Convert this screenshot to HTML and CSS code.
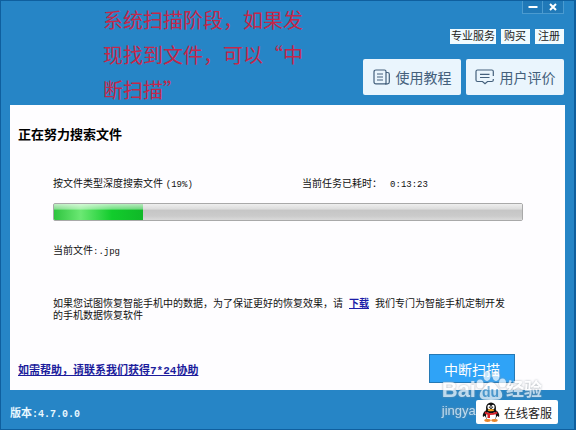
FILE: index.html
```html
<!DOCTYPE html>
<html lang="zh-CN">
<head>
  <meta charset="UTF-8" />
  <meta name="viewport" content="width=device-width, initial-scale=1.0"/>
  <title>数据恢复</title>
  <link rel="stylesheet" href="styles.css">
</head>
<body>
  <div class="window">
    <p class="note">系统扫描阶段，如果发现找到文件，可以“中断扫描”</p>

    <header class="header">
      <div class="window-controls">
        <button class="control" aria-label="最小化">
          <svg width="10" height="10" viewBox="0 0 10 10"><path d="M0.5 5H9.5" stroke="#fff" stroke-width="2"/></svg>
        </button>
        <button class="control" aria-label="关闭">
          <svg width="8" height="8" viewBox="0 0 8 8"><path d="M1 1L7 7M7 1L1 7" stroke="#fff" stroke-width="2"/></svg>
        </button>
      </div>
      <nav class="links">
        <button class="tag">专业服务</button>
        <button class="tag">购买</button>
        <button class="tag">注册</button>
      </nav>
      <div class="actions">
        <button class="action">
          <svg width="18" height="16" viewBox="0 0 18 16" fill="none" stroke="#44607c" stroke-width="1.2">
            <path d="M3 1H11.500Q13 1 13 2.500V14.800H3Q1 14.800 1 13V3Q1 1 3 1Z"/>
            <path d="M13 3.500H14.500Q16.300 3.500 16.300 5.300V13Q16.300 14.800 14.500 14.800H12"/>
            <path d="M4 5H10M4 8H10M4 11H10"/>
          </svg>
          使用教程
        </button>
        <button class="action">
          <svg width="20" height="16" viewBox="0 0 20 16" fill="none" stroke="#44607c" stroke-width="1.2">
            <path d="M18.300 7V2.500Q18.300 1 16.800 1H2.500Q1 1 1 2.500V11Q1 12.500 2.500 12.500H7.500L10 14.800L12.500 12.500H16.800Q18.300 12.500 18.300 11V10"/>
            <path d="M5 5.300H14.500M5 8.500H14.500"/>
          </svg>
          用户评价
        </button>
      </div>
    </header>

    <main class="panel">
      <h1 class="title">正在努力搜索文件</h1>
      <div class="scan">
        <div class="status">
          <label for="scan-progress">按文件类型深度搜索文件 <span class="num">(19%)</span></label>
          <span class="elapsed"><span>当前任务已耗时：</span><span class="num">0:13:23</span></span>
        </div>
        <progress id="scan-progress" class="progress" value="19" max="100"></progress>
        <p class="current">当前文件<span class="num">:.jpg</span></p>
        <p class="tip">如果您试图恢复智能手机中的数据，为了保证更好的恢复效果，请<a class="download" href="#">下载</a>我们专门为智能手机定制开发<br>的手机数据恢复软件</p>
      </div>
      <div class="panel-bottom">
        <a class="help" href="#">如需帮助，请联系我们获得<span class="help-num">7*24</span>协助</a>
        <button class="stop">中断扫描</button>
      </div>
    </main>

    <footer class="footer">
      <span class="version">版本<span class="version-num">:4.7.0.0</span></span>
      <button class="service">
        <svg width="18" height="20" viewBox="0 0 18 20">
          <path d="M3 9Q0 12 1 15L4 13ZM15 9Q18 12 17 15L14 13Z" fill="#111"/>
          <ellipse cx="9" cy="12" rx="6.500" ry="6.500" fill="#111"/>
          <ellipse cx="9" cy="14" rx="5" ry="5" fill="#fff"/>
          <ellipse cx="9" cy="6" rx="5" ry="5.500" fill="#111"/>
          <ellipse cx="7" cy="5" rx="1.600" ry="2.200" fill="#fff"/>
          <ellipse cx="11" cy="5" rx="1.600" ry="2.200" fill="#fff"/>
          <circle cx="7.400" cy="5.200" r="0.600" fill="#111"/>
          <circle cx="10.600" cy="5.200" r="0.600" fill="#111"/>
          <ellipse cx="9" cy="8.200" rx="3.200" ry="1.100" fill="#f5a623"/>
          <path d="M3 9.500Q9 13 15 9.500L15.500 11.500Q12 13 8 13V16H5.500V12.700L2.700 11.500Z" fill="#d8232a"/>
          <ellipse cx="5.500" cy="18.500" rx="3.200" ry="1.400" fill="#e8852a"/>
          <ellipse cx="12.500" cy="18.500" rx="3.200" ry="1.400" fill="#e8852a"/>
        </svg>
        在线客服
      </button>
    </footer>

    <div class="watermark">
      <div class="brand">
        <span>Bai</span>
        <span class="paw">
          <svg width="30" height="31" viewBox="0 0 30 29" fill="#fff">
            <ellipse cx="4" cy="13" rx="3.500" ry="4.500"/>
            <ellipse cx="11" cy="5" rx="3.500" ry="5"/>
            <ellipse cx="20" cy="5" rx="3.500" ry="5"/>
            <ellipse cx="26.500" cy="12" rx="3.500" ry="4.500"/>
            <path d="M15 11C11 11 10 15 7 18C3 21 2 28 8 28.500C12 29 18 29 22 28.500C28 28 27 21 23 18C20 15 19 11 15 11Z"/>
          </svg>
          <span class="paw-text">du</span>
        </span>
        <span class="brand-cn">经验</span>
      </div>
      <div class="domain">jingya</div>
    </div>
  </div>
</body>
</html>
```
FILE: styles.css
```css
* {
  margin: 0;
  padding: 0;
  box-sizing: border-box;
}

body {
  font-family: "Liberation Sans", "Noto Sans CJK SC", sans-serif;
  font-size: 10px;
  color: #111;
}

button {
  font-family: inherit;
  border: none;
  cursor: pointer;
}

.window {
  position: relative;
  display: flex;
  flex-direction: column;
  min-height: 100vh;
  padding: 0 9px;
  overflow: hidden;
  background-color: #2685c6;
  border: 1px solid #0f5f9e;
  border-right-width: 2px;
}

.note {
  position: absolute;
  top: 1px;
  left: 102px;
  width: 204px;
  font-family: "Noto Sans CJK SC", sans-serif;
  font-size: 20px;
  line-height: 35px;
  color: #c4274a;
}

.header {
  display: flex;
  flex-direction: column;
  align-items: flex-end;
  padding-right: 1px;
}

.window-controls {
  display: flex;
}

.control {
  display: flex;
  align-items: center;
  justify-content: center;
  width: 21px;
  height: 13px;
  background-color: #2079b8;
  border: 1px solid #4b9bd0;
  border-top: none;
}

.control + .control {
  border-left: none;
}

.links {
  display: flex;
  gap: 5px;
  margin-top: 15px;
}

.tag {
  height: 15px;
  padding: 0 1px;
  font-size: 11px;
  line-height: 15px;
  color: #222;
  background-color: #f0fbff;
}

.tag + .tag {
  padding: 0 4px 0 3px;
}

.actions {
  display: flex;
  gap: 5px;
  margin-top: 15px;
}

.action {
  display: flex;
  align-items: center;
  justify-content: center;
  gap: 5px;
  width: 98px;
  height: 36px;
  font-size: 14px;
  color: #44607c;
  background-color: #eaf5fd;
  border-radius: 2px;
}

.panel {
  flex: 1;
  display: flex;
  flex-direction: column;
  margin-top: 10px;
  padding: 20px 8px 7px;
  background-color: #fefdff;
}

.title {
  font-size: 13px;
  font-weight: bold;
  line-height: 20px;
  color: #000;
}

.scan {
  flex: 1;
  padding: 32px 34px 0 35px;
}

.status {
  display: grid;
  grid-template-columns: 53% 47%;
  line-height: 14px;
}

.elapsed {
  display: flex;
  align-items: baseline;
  gap: 8px;
}

.num {
  font-family: "Liberation Mono", monospace;
  font-size: 9px;
}

.progress {
  display: block;
  width: 100%;
  height: 18px;
  margin-top: 11px;
  appearance: none;
  border: 1px solid #a9a9a9;
  border-radius: 2px;
  overflow: hidden;
}

.progress::-webkit-progress-bar {
  background: linear-gradient(#eeeeee 0, #dddddd 30%, #c6c6c6 40%, #cbcbcb 75%, #dadada);
}

.progress::-webkit-progress-value {
  background:
    linear-gradient(rgba(255, 255, 255, 0.7), rgba(255, 255, 255, 0.4) 32%, transparent 38%),
    linear-gradient(90deg, #2fc43f, #6be873 30%, #12cc2c 65%, #10b828);
}

.current {
  margin-top: 23px;
  line-height: 14px;
}

.tip {
  margin-top: 39px;
  line-height: 12px;
}

.download {
  margin: 0 6px;
  font-weight: bold;
  color: #1c1ca8;
}

.panel-bottom {
  display: flex;
  align-items: center;
  justify-content: space-between;
  padding-right: 42px;
}

.help {
  font-size: 11px;
  font-weight: bold;
  color: #1c1c9c;
}

.help-num {
  font-family: "Liberation Mono", monospace;
}

.stop {
  width: 86px;
  height: 29px;
  font-size: 14px;
  color: #fff;
  background-color: #2fa3f7;
  border: 1px solid #2579b5;
}

.footer {
  display: flex;
  align-items: center;
  justify-content: space-between;
  height: 39px;
  padding: 5px 7px 0 0;
}

.version {
  font-size: 11px;
  font-weight: bold;
  color: #e8f8ff;
}

.version-num {
  font-family: "Liberation Mono", monospace;
  font-size: 10px;
}

.service {
  position: relative;
  z-index: 1;
  display: flex;
  align-items: center;
  gap: 4px;
  height: 24px;
  padding: 0 6px;
  font-size: 12px;
  color: #222;
  background-color: #fff;
  border-radius: 2px;
}

/* sits under the service button, over the panel and the stop button */
.watermark {
  position: absolute;
  right: 32px;
  bottom: 8px;
  color: #fff;
  opacity: 0.7;
  pointer-events: none;
  filter: drop-shadow(0 0 1px #8a959d);
}

.brand {
  display: flex;
  align-items: flex-end;
  font-size: 22px;
  font-weight: bold;
  line-height: 22px;
}

.paw {
  position: relative;
  height: 31px;
}

.paw-text {
  position: absolute;
  left: 6px;
  bottom: 1px;
  font-size: 14px;
  line-height: 16px;
  color: #5b9fce;
}

.brand-cn {
  font-size: 18px;
}

.domain {
  font-size: 13px;
  line-height: 20px;
}
```
